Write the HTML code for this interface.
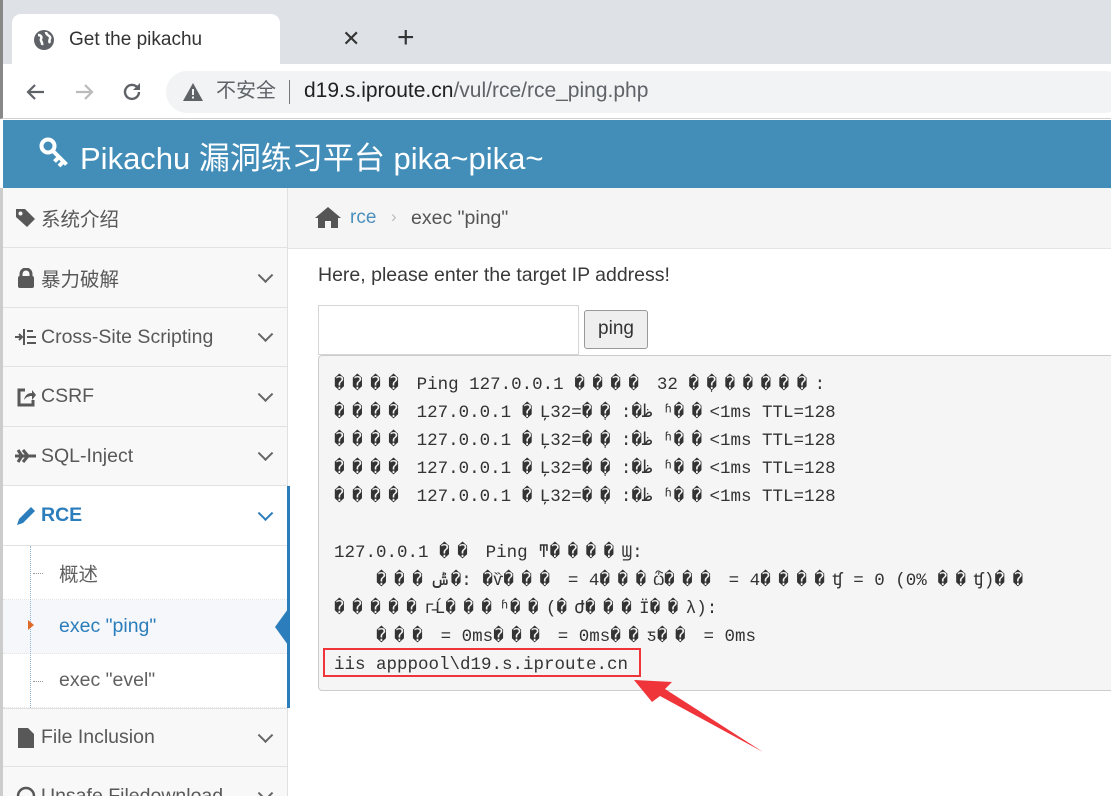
<!DOCTYPE html>
<html><head><meta charset="utf-8"><style>
*{box-sizing:border-box;margin:0;padding:0}
html,body{width:1111px;height:796px;overflow:hidden}
body{background:#fff;font-family:"Liberation Sans","Noto Sans CJK SC",sans-serif;position:relative}
.abs{position:absolute}
.tabbar{left:0;top:0;width:1111px;height:64px;background:#dee1e6;border-left:3px solid #888}
.tab{left:12px;top:14px;width:268px;height:52px;background:#fff;border-radius:9px 9px 0 0}
.toolbar{left:0;top:64px;width:1111px;height:55px;background:#fff;border-left:3px solid #888;border-bottom:1px solid #d0d0d0}
.pill{left:166px;top:71px;width:960px;height:42px;background:#f1f3f4;border-radius:21px}
.header{left:3px;top:120px;width:1108px;height:68px;background:#438eb9;color:#fff;font-size:31px}
.side{left:0;top:188px;width:288px;height:608px;background:#f8f8f8;border-left:3px solid #ccc;border-right:1px solid #e0e0e0}
.item{position:absolute;left:3px;width:284px;border-bottom:1px solid #e2e2e2;font-size:19.5px;color:#585858;display:flex;align-items:center;padding-left:12px}
.chev{position:absolute;right:16px;top:50%;width:11px;height:11px;border-right:2px solid #666;border-bottom:2px solid #666;transform:translateY(-75%) rotate(45deg)}
.ic{width:22px;margin-right:4px;display:inline-flex;justify-content:center}
.sub{position:absolute;left:3px;width:284px;background:#fff;font-size:19.5px;color:#616161;padding-left:56px;display:flex;align-items:center;border-bottom:1px dotted #e4e4e4}
.mono{font-family:"Liberation Mono","DejaVu Sans Mono",monospace;font-size:17.5px;color:#333;white-space:pre;line-height:28px}
.mono b{font-weight:normal;letter-spacing:7.5px}
</style></head><body>
<div class="abs tabbar"></div>
<div class="abs tab"></div>
<svg class="abs" style="left:33px;top:29px" width="22" height="22" viewBox="0 0 22 22"><circle cx="11" cy="11" r="10" fill="#5f6368"/><path d="M5 6c3 0 4 2 3 4s2 3 1 6M13 3c0 3 3 3 4 5s-2 3 0 6" stroke="#fff" stroke-width="2.5" fill="none"/></svg>
<div class="abs" style="left:69px;top:29px;font-size:19px;color:#333">Get the pikachu</div>
<div class="abs" style="left:342px;top:26px;font-size:22px;color:#333">✕</div>
<div class="abs" style="left:397px;top:21px;font-size:30px;color:#333">+</div>
<div class="abs toolbar"></div>
<svg class="abs" style="left:24px;top:80px" width="24" height="24" viewBox="0 0 24 24"><path d="M20 12H5M11 5l-7 7 7 7" stroke="#5f6368" stroke-width="2.2" fill="none"/></svg>
<svg class="abs" style="left:72px;top:80px" width="24" height="24" viewBox="0 0 24 24"><path d="M4 12h15M13 5l7 7-7 7" stroke="#bbb" stroke-width="2.2" fill="none"/></svg>
<svg class="abs" style="left:120px;top:80px" width="24" height="24" viewBox="0 0 24 24"><path d="M19 12a7 7 0 1 1-2-5" stroke="#5f6368" stroke-width="2.4" fill="none"/><path d="M20 3v7h-7z" fill="#5f6368"/></svg>
<div class="abs pill"></div>
<svg class="abs" style="left:183px;top:83px" width="20" height="18" viewBox="0 0 20 18"><path d="M10 0L20 18H0z" fill="#5f6368"/><rect x="9" y="6" width="2" height="6" fill="#f1f3f4"/><rect x="9" y="13.5" width="2" height="2" fill="#f1f3f4"/></svg>
<div class="abs" style="left:216px;top:79px;font-size:20px;color:#5f6368;line-height:24px">不安全</div>
<div class="abs" style="left:289px;top:80px;width:1px;height:24px;background:#777"></div>
<div class="abs" style="left:304px;top:79px;font-size:21px;color:#202124;line-height:24px">d19.s.iproute.cn<span style="color:#5f6368">/vul/rce/rce_ping.php</span></div>
<div class="abs header"><div style="position:absolute;left:77px;top:13px">Pikachu 漏洞练习平台 pika~pika~</div></div>
<svg class="abs" style="left:38px;top:136px" width="34" height="34" viewBox="0 0 34 34"><circle cx="10" cy="10" r="6.5" fill="none" stroke="#fff" stroke-width="4"/><path d="M14.5 14.5l14 14M21 21l-4.5 4.5M25.5 25.5l-4.5 4.5" stroke="#fff" stroke-width="4"/></svg>

<div class="abs side"></div>
<div class="item" style="top:188px;height:60px;padding-left:12px"><span class="ic"><svg width="22" height="20"><path d="M1 1h9l10 10-8 8L1 9z" fill="#585858"/><circle cx="5.5" cy="5.5" r="2" fill="#f8f8f8"/></svg></span>系统介绍</div>
<div class="item" style="top:248px;height:60px"><span class="ic"><svg width="18" height="20"><rect x="1" y="8" width="16" height="12" rx="2" fill="#585858"/><path d="M4 9V6a5 5 0 0 1 10 0v3" stroke="#585858" stroke-width="3" fill="none"/></svg></span>暴力破解<i class="chev"></i></div>
<div class="item" style="top:308px;height:59px"><span class="ic"><svg width="22" height="18"><path d="M0 9h6M4 6l3 3-3 3M9 1v16M12 3h6M12 9h9M12 15h9" stroke="#585858" stroke-width="2" fill="none"/></svg></span>Cross-Site Scripting<i class="chev"></i></div>
<div class="item" style="top:367px;height:60px"><span class="ic"><svg width="20" height="20"><path d="M9 3H3v15h14v-5" stroke="#585858" stroke-width="3" fill="none"/><path d="M8 13c1-5 4-7 8-7V3l4 5-4 5V9c-3 0-6 1-8 4z" fill="#585858"/></svg></span>CSRF<i class="chev"></i></div>
<div class="item" style="top:427px;height:59px"><span class="ic"><svg width="22" height="14"><path d="M0 7h21M7 7L3 1M7 7L3 13M13 7l-5-6M13 7l-5 6" stroke="#585858" stroke-width="3" fill="none"/></svg></span>SQL-Inject<i class="chev"></i></div>
<div class="item" style="top:486px;height:60px;background:#fff;color:#2b7dbc;font-weight:bold"><span class="ic"><svg width="22" height="22"><path d="M2 20l2-6L16 2l4 4L8 18z" fill="#2b7dbc"/></svg></span>RCE<i class="chev" style="border-color:#2b7dbc"></i></div>
<div class="sub" style="top:546px;height:54px">概述</div>
<div class="sub" style="top:600px;height:54px;background:#f5f7fa;color:#2b7dbc">exec "ping"</div>
<div class="sub" style="top:654px;height:54px">exec "evel"</div>
<div class="abs" style="left:30px;top:546px;height:162px;border-left:1px dotted #8ab3d6"></div>
<div class="abs" style="left:33px;top:573px;width:10px;border-top:1px dotted #999"></div>
<div class="abs" style="left:33px;top:681px;width:10px;border-top:1px dotted #999"></div>
<div class="abs" style="left:28px;top:620px;border-left:6px solid #e06a2a;border-top:5px solid transparent;border-bottom:5px solid transparent"></div>
<div class="abs" style="left:287px;top:486px;width:3px;height:222px;background:#2b7dbc"></div>
<div class="abs" style="left:275px;top:609px;border-right:13px solid #2b7dbc;border-top:18px solid transparent;border-bottom:18px solid transparent"></div>
<div class="item" style="top:708px;height:59px;border-top:1px solid #e2e2e2"><span class="ic"><svg width="16" height="20"><path d="M0 0h10l6 6v14H0z" fill="#585858"/></svg></span>File Inclusion<i class="chev"></i></div>
<div class="item" style="top:767px;height:59px"><span class="ic"><svg width="20" height="20"><circle cx="10" cy="10" r="8" stroke="#585858" stroke-width="2.5" fill="none"/></svg></span>Unsafe Filedownload<i class="chev"></i></div>

<div class="abs" style="left:288px;top:188px;width:823px;height:61px;background:#f5f5f5;border-bottom:1px solid #e5e5e5"></div>
<svg class="abs" style="left:314px;top:206px" width="28" height="22" viewBox="0 0 28 22"><path d="M14 1L1 12h3v10h7v-7h6v7h7V12h3z" fill="#555"/></svg>
<div class="abs" style="left:350px;top:207px;font-size:19px;color:#4c8fbd">rce</div>
<div class="abs" style="left:391px;top:207px;font-size:17px;color:#bbb">›</div>
<div class="abs" style="left:411px;top:207px;font-size:19.5px;color:#555">exec "ping"</div>
<div class="abs" style="left:318px;top:264px;font-size:19.5px;color:#393939">Here, please enter the target IP address!</div>
<div class="abs" style="left:318px;top:305px;width:261px;height:50px;border:1px solid #d5d5d5;background:#fff"></div>
<div class="abs" style="left:584px;top:310px;width:64px;height:39px;border:1px solid #999;border-radius:3px;background:#efefef;font-size:19px;color:#333;text-align:center;line-height:36px">ping</div>
<div class="abs" style="left:318px;top:355px;width:800px;height:336px;background:#f5f5f5;border:1px solid #ccc;border-radius:4px"></div>
<div class="abs mono" style="left:334px;top:371px"><b>����</b> Ping 127.0.0.1 <b>����</b> 32 <b>�</b>ֽ<b>������</b>:
<b>����</b> 127.0.0.1 <b>�</b>Ļظ�: <b>�</b>ֽ<b>�</b>=32 ʱ<b>��</b>&lt;1ms TTL=128
<b>����</b> 127.0.0.1 <b>�</b>Ļظ�: <b>�</b>ֽ<b>�</b>=32 ʱ<b>��</b>&lt;1ms TTL=128
<b>����</b> 127.0.0.1 <b>�</b>Ļظ�: <b>�</b>ֽ<b>�</b>=32 ʱ<b>��</b>&lt;1ms TTL=128
<b>����</b> 127.0.0.1 <b>�</b>Ļظ�: <b>�</b>ֽ<b>�</b>=32 ʱ<b>��</b>&lt;1ms TTL=128

127.0.0.1 <b>��</b> Ping ͳ<b>����</b>Ϣ:
    <b>���</b>ݰ<b>�</b>: <b>�</b>ѷ<b>���</b> = 4<b>���</b>ѽ<b>���</b> = 4<b>����</b>ʧ = 0 (0% <b>��</b>ʧ)<b>��</b>
<b>�����</b>г̵Ĺ<b>���</b>ʱ<b>��</b>(<b>�</b>Ժ<b>���</b>Ϊ<b>��</b>λ):
    <b>���</b> = 0ms<b>���</b> = 0ms<b>��</b>ƽ<b>��</b> = 0ms
iis apppool\d19.s.iproute.cn</div>
<div class="abs" style="left:323px;top:648px;width:318px;height:29px;border:2px solid #f0353a"></div>
<svg class="abs" style="left:620px;top:670px" width="160" height="100" viewBox="0 0 160 100"><path d="M14 10L52 12L45 19L143 82L40 26L32 32z" fill="#f0353a"/></svg>
</body></html>
